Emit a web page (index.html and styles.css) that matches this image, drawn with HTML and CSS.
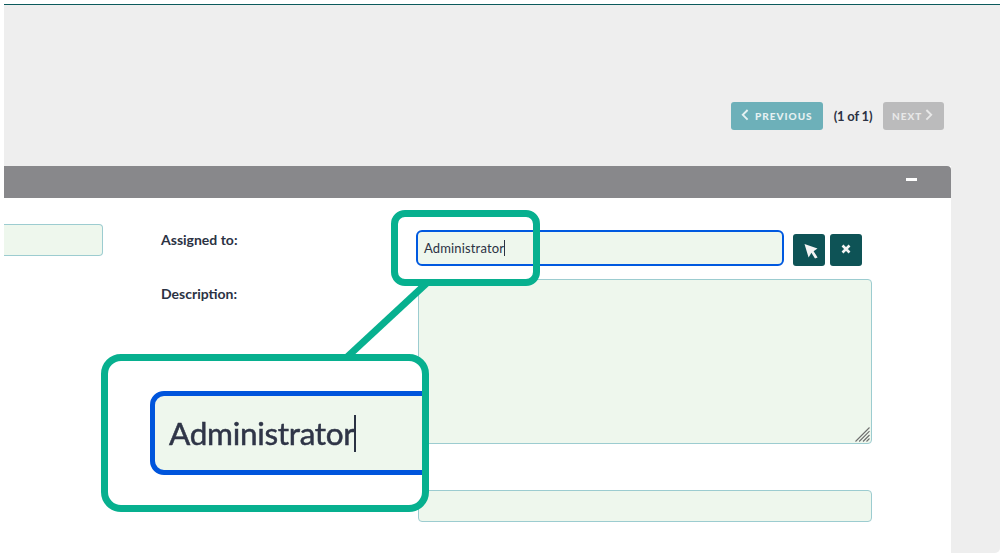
FILE: index.html
```html
<!DOCTYPE html>
<html lang="en">
<head>
<meta charset="utf-8">
<title>Assigned to</title>
<link rel="stylesheet" href="styles.css">
</head>
<body>
<div class="app">
  <div class="pager">
    <button class="pbtn prev"><svg class="chev" width="8" height="12" viewBox="0 0 8 12"><path d="M6.6 1 1.8 5.8l4.8 4.8" /></svg><span>PREVIOUS</span></button>
    <span class="count">(1 of 1)</span>
    <button class="pbtn next"><span>NEXT</span><svg class="chev" width="8" height="12" viewBox="0 0 8 12"><path d="M1.4 1 6.2 5.8l-4.8 4.8" /></svg></button>
  </div>
  <section class="panel">
    <div class="phead"><span class="minus"></span></div>
    <div class="pbody">
      <div class="leftcol"><div class="field short"></div></div>
      <div class="labels">
        <label class="lab first">Assigned to:</label>
        <label class="lab">Description:</label>
      </div>
      <div class="fields">
        <div class="assign">
          <div class="field focus"><span class="val">Administrator</span><span class="caret"></span></div>
          <button class="sq pick"><svg width="16" height="16" viewBox="0 0 16 16"><path d="M1.5 1 14.5 5.6 10.6 8.2 14.6 14.4 12 15.6 8.4 9.8 5.6 14.6z" fill="#f4f4f4"/></svg></button>
          <button class="sq clear"><svg width="10" height="10" viewBox="0 0 10 10"><path d="M1.5 1.5l7 7M8.5 1.5l-7 7" stroke="#f4f4f4" stroke-width="2.6" fill="none"/></svg></button>
        </div>
        <div class="field area"><svg class="grip" width="15" height="15" viewBox="0 0 15 15"><path d="M14.5.5 .5 14.5M14.5 4.2 4.2 14.5M14.5 8 8 14.5M14.5 11.5 11.5 14.5" stroke="#6e6e6e" stroke-width="1.1" fill="none"/></svg></div>
        <div class="field wide"></div>
      </div>
    </div>
  </section>
</div>
<svg class="line" width="100" height="90" viewBox="0 0 100 90"><path d="M86 0 4 76" stroke="#07b08f" stroke-width="7" fill="none"/></svg>
<div class="spot"></div>
<div class="zoomcard">
  <div class="bigfield"><span class="bigval">Administrator</span><span class="bigcaret"></span></div>
</div>
</body>
</html>
```
FILE: styles.css
```css
* { box-sizing: border-box; }
html, body { margin: 0; padding: 0; height: 560px; overflow: hidden; background: #fff; }
body { font-family: Lato, "Liberation Sans", sans-serif; color: #2b3243; position: relative; padding: 4px 4px 0; }
.app { width: 996px; height: 549px; background: #eee; border-top: 1px solid #0b5a5c; border-bottom-right-radius: 5px; }
.pager { height: 161px; padding: 97px 56px 0 0; display: flex; justify-content: flex-end; align-items: flex-start; }
.pbtn { height: 28px; border: 0; border-radius: 3px; color: #e6f1f2; font: 900 10px Lato, sans-serif; letter-spacing: 1px; display: flex; align-items: center; gap: 6px; padding: 0 10px; }
.prev { width: 92px; background: #6db0b9; }
.next { width: 61px; background: #bbbbbc; color: #e8e8e8; padding: 0 8px 0 9px; gap: 3px; }
.chev { fill: none; stroke: currentColor; stroke-width: 1.9; margin-top: -2px; flex: none; }
.count { width: 60px; text-align: center; font-size: 13px; font-weight: 700; line-height: 28px; letter-spacing: -0.2px; }
.panel { width: 947px; height: 388px; background: #fff; }
.phead { height: 32px; background: #88888b; border-radius: 0 4px 0 0; display: flex; justify-content: flex-end; padding: 12px 34px 0 0; }
.minus { width: 11px; height: 3px; background: #fff; }
.pbody { display: flex; padding-top: 26px; }
.leftcol { width: 157px; }
.field { background: #eef7ed; border: 1px solid #9cccd0; border-radius: 4px; }
.short { width: 99px; height: 32px; border-left: 0; border-radius: 0 4px 4px 0; }
.labels { width: 257px; font-size: 14px; font-weight: 700; display: flex; flex-direction: column; }
.lab { line-height: 16px; height: 54px; padding-top: 8px; }
.fields { width: 480px; display: flex; flex-direction: column; }
.assign { display: flex; align-items: flex-end; margin-top: 6px; height: 36px; margin-left: -2px; }
.focus { width: 368px; height: 36px; border: 2px solid #0059e0; border-radius: 6px; padding-left: 6px; display: flex; align-items: center; font-size: 13px; color: #2b3243; letter-spacing: 0.15px; margin-right: 9px; }
.caret { width: 1px; height: 16px; background: #2b3243; }
.sq { width: 32px; height: 32px; border: 0; border-radius: 3px; background: #0e5356; margin-right: 5px; padding: 0 0 3px; display: flex; align-items: center; justify-content: center; }
.pick { padding: 1px 0 0 3px; }
.sq svg { display: block; }
.area { height: 165px; width: 454px; margin-top: 13px; position: relative; }
.grip { position: absolute; right: 1px; bottom: 1px; }
.wide { height: 32px; width: 454px; margin-top: 46px; }
.spot { position: absolute; left: 391px; top: 210px; width: 149px; height: 76px; border: 7px solid #07b08f; border-radius: 14px; }
.line { position: absolute; left: 342px; top: 282px; }
.zoomcard { position: absolute; left: 101px; top: 354px; width: 328px; height: 158px; background: #fff; border: 7px solid #07b08f; border-radius: 20px; overflow: hidden; }
.bigfield { position: absolute; left: 42px; top: 30px; width: 300px; height: 84px; background: #eef7ed; border: 5px solid #0055dc; border-radius: 14px; display: flex; align-items: center; padding-left: 14px; filter: blur(0.5px); }
.bigval { font-size: 31.5px; color: #2f3547; letter-spacing: -0.3px; -webkit-text-stroke: 0.5px #2f3547; }
.bigcaret { width: 2px; height: 37px; background: #2b3243; }
```
